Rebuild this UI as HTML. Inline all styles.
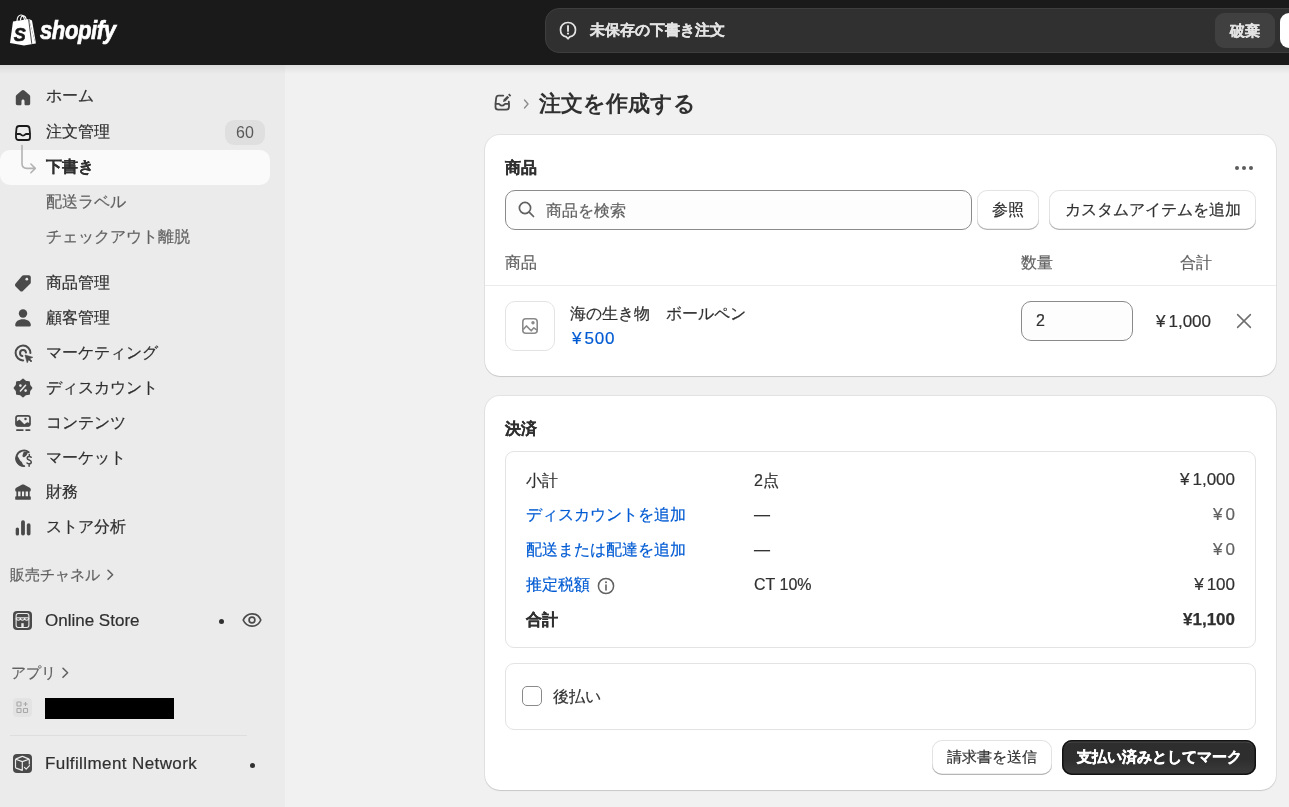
<!DOCTYPE html>
<html lang="ja"><head><meta charset="utf-8">
<style>
*{box-sizing:border-box;margin:0;padding:0}
html,body{width:1289px;height:807px;overflow:hidden}
body{position:relative;background:#f1f1f1;font-family:"Liberation Sans",sans-serif;color:#303030;font-size:16px}
#root{position:absolute;left:0;top:0;width:1289px;height:807px;will-change:transform}
.a{position:absolute;white-space:nowrap}
.t{position:absolute;white-space:nowrap;line-height:20px;font-size:16px;-webkit-text-stroke-width:0.2px}
#hdr{position:absolute;left:0;top:0;width:1289px;height:65px;background:#1a1a1a;z-index:5}
#hsh{position:absolute;left:0;top:65px;width:1289px;height:9px;background:linear-gradient(rgba(0,0,0,.07),rgba(0,0,0,0));z-index:4}
#side{position:absolute;left:0;top:65px;width:285px;height:742px;background:#ebebeb}
.ic{position:absolute;width:18px;height:18px}
.sub{color:#616161}
.card{position:absolute;left:485px;width:791px;background:#fff;border-radius:15px;box-shadow:0 0 0 1px rgba(0,0,0,.06),0 1px 1px rgba(0,0,0,.12)}
.btn{position:absolute;background:#fff;border-radius:10px;box-shadow:inset 0 -1.3px 0 #b5b5b5,inset 0 0 0 1px rgba(0,0,0,.11)}
.inp{position:absolute;background:#fdfdfd;border:1px solid #8a8a8a;border-radius:10px}
.box{position:absolute;border:1px solid #e3e3e3;border-radius:9px}
.blue{color:#005bd3}
.num{font-size:17px}
.yen{margin-right:3px}
</style></head><body><div id="root">

<div id="hdr">
  <!-- logo -->
  <svg class="a" style="left:9px;top:14px" width="29" height="32" viewBox="0 0 29 32">
    <path d="M4 7.5 L20 5 L26.5 29.5 L15 31.5 L1 29 Z" fill="#fff"/>
    <path d="M20 5 L23 6.5 L27 29.5 L26.5 29.5 Z" fill="#fff"/>
    <path d="M8 7 C8 3 10 1 12 1 C14 1 15 3 15.5 6" stroke="#fff" stroke-width="1.2" fill="none"/>
    <path d="M11.5 6.5 C11.5 3 13 1.6 14.6 1.8 C16.3 2 17 4 17.3 6" stroke="#fff" stroke-width="1.2" fill="none"/>
    <text x="4.8" y="26.5" font-family="Liberation Sans" font-weight="bold" font-style="italic" font-size="18" fill="#1a1a1a" stroke="#1a1a1a" stroke-width="0.6">S</text>
    <path d="M19.6 5.2 L22.8 29.8" stroke="#1a1a1a" stroke-width="0.8"/>
  </svg>
  <div class="a" style="left:40px;top:15px;font-size:26px;line-height:30px;font-weight:bold;font-style:italic;color:#fff;letter-spacing:-0.5px;transform:scaleX(0.85);transform-origin:0 0;-webkit-text-stroke:0.7px #fff">shopify</div>

  <!-- unsaved bar -->
  <div class="a" style="left:545px;top:8px;width:760px;height:45px;background:#303030;border:1px solid #3e3e3e;border-radius:14px"></div>
  <svg class="a" style="left:559px;top:21px" width="18" height="19" viewBox="0 0 18 19">
    <path d="M9 1.5 C4.6 1.5 1.5 4.6 1.5 8.8 C1.5 12.6 4 15.3 7.3 15.9 L9 17.8 L10.7 15.9 C14 15.3 16.5 12.6 16.5 8.8 C16.5 4.6 13.4 1.5 9 1.5 Z" fill="none" stroke="#e3e3e3" stroke-width="1.7" stroke-linejoin="round"/>
    <path d="M9 5 V10" stroke="#e3e3e3" stroke-width="1.9" stroke-linecap="round"/>
    <circle cx="9" cy="12.6" r="1.1" fill="#e3e3e3"/>
  </svg>
  <div class="t" style="left:590px;top:20px;font-size:15px;font-weight:bold;-webkit-text-stroke-width:0.25px;color:#e3e3e3">未保存の下書き注文</div>
  <div class="a" style="left:1215px;top:13px;width:60px;height:35px;background:#404040;border-radius:9px"></div>
  <div class="t" style="left:1230px;top:21px;font-size:15px;font-weight:bold;-webkit-text-stroke-width:0.25px;color:#e3e3e3">破棄</div>
  <div class="a" style="left:1280px;top:13px;width:60px;height:35px;background:#fff;border-radius:9px"></div>
</div>

<div id="side"></div><div id="hsh"></div>
<!-- highlight -->
<div class="a" style="left:0;top:150px;width:270px;height:35px;background:#fafafa;border-radius:10px"></div>

<!-- sidebar icons -->
<svg class="ic" style="left:15px;top:125px;width:16px;height:16px" viewBox="0 0 16 16"><path d="M4.2 1 H11.8 C13.3 1 14.3 2 14.5 3.4 L15 8.5 V12.4 C15 13.9 13.9 15 12.4 15 H3.6 C2.1 15 1 13.9 1 12.4 V8.5 L1.5 3.4 C1.7 2 2.7 1 4.2 1 Z" fill="none" stroke="#1a1a1a" stroke-width="1.8" stroke-linejoin="round"/><path d="M1.5 9 H5 C5.6 9 6 10.6 8 10.6 C10 10.6 10.4 9 11 9 H14.5" fill="none" stroke="#1a1a1a" stroke-width="1.8" stroke-linejoin="round"/></svg>
<svg class="a" style="left:18px;top:144px" width="22" height="32" viewBox="0 0 22 32"><path d="M4 1.5 V19.5 C4 22.6 5.6 24.4 8.8 24.4 H17 M12.9 20 L17.3 24.4 L12.9 28.8" fill="none" stroke="#b3b3b3" stroke-width="1.6" stroke-linecap="round" stroke-linejoin="round"/></svg>


<svg class="a" style="left:13px;top:87px" width="20" height="20" viewBox="0 0 20 20"><path d="M8.7 3.5 C9.5 2.8 10.5 2.8 11.3 3.5 L16.5 8 C17 8.4 17.2 9 17.2 9.6 V16.6 C17.2 17.5 16.5 18.2 15.6 18.2 H12.8 C12.1 18.2 11.5 17.6 11.5 16.9 V13.9 C11.5 13 10.8 12.4 10 12.4 C9.2 12.4 8.5 13 8.5 13.9 V16.9 C8.5 17.6 7.9 18.2 7.2 18.2 H4.4 C3.5 18.2 2.8 17.5 2.8 16.6 V9.6 C2.8 9 3 8.4 3.5 8 Z" fill="#4a4a4a"/></svg>
<svg class="a" style="left:13px;top:273px" width="20" height="20" viewBox="0 0 20 20"><path d="M10.6 2.2 H15.9 C16.9 2.2 17.8 3.1 17.8 4.1 V9.4 C17.8 9.9 17.6 10.4 17.2 10.8 L9.9 17.9 C9.1 18.7 7.9 18.7 7.1 17.9 L2.6 13.4 C1.8 12.6 1.8 11.4 2.6 10.6 L9.2 2.8 C9.6 2.4 10.1 2.2 10.6 2.2 Z" fill="#4a4a4a"/><circle cx="13.8" cy="6.2" r="1.35" fill="#ebebeb"/></svg>
<svg class="a" style="left:13px;top:308px" width="20" height="20" viewBox="0 0 20 20"><circle cx="10" cy="5.45" r="4.2" fill="#4a4a4a"/><path d="M2.2 16.9 C2.2 13.6 5.5 11.2 10 11.2 C14.5 11.2 17.8 13.6 17.8 16.9 C17.8 17.8 17.1 18.5 16.2 18.5 H3.8 C2.9 18.5 2.2 17.8 2.2 16.9 Z" fill="#4a4a4a"/></svg>
<svg class="a" style="left:13px;top:343px" width="20" height="20" viewBox="0 0 20 20"><path d="M17.4 10.1 A7.4 7.4 0 1 0 10.2 17.4" fill="none" stroke="#4a4a4a" stroke-width="2" stroke-linecap="round"/><path d="M13 9.6 A3 3 0 1 0 9.4 13" fill="none" stroke="#4a4a4a" stroke-width="2" stroke-linecap="round"/><path d="M12 12 L19.8 14.3 L16.7 15.7 L19 18 L18 19 L15.7 16.7 L14.2 19.8 Z" fill="#4a4a4a" stroke="#4a4a4a" stroke-width=".6" stroke-linejoin="round"/></svg>
<svg class="a" style="left:13px;top:378px" width="20" height="20" viewBox="0 0 20 20"><path d="M10.00 1.40 L12.68 3.53 L16.08 3.92 L16.47 7.32 L18.60 10.00 L16.47 12.68 L16.08 16.08 L12.68 16.47 L10.00 18.60 L7.32 16.47 L3.92 16.08 L3.53 12.68 L1.40 10.00 L3.53 7.32 L3.92 3.92 L7.32 3.53 Z" fill="#4a4a4a" stroke="#4a4a4a" stroke-width="1.6" stroke-linejoin="round"/><circle cx="7.4" cy="7.6" r="1.3" fill="#ebebeb"/><circle cx="12.6" cy="12.6" r="1.3" fill="#ebebeb"/><path d="M7.4 13 L12.6 7.2" stroke="#ebebeb" stroke-width="1.5" stroke-linecap="round"/></svg>
<svg class="a" style="left:13px;top:413px" width="20" height="20" viewBox="0 0 20 20"><rect x="3" y="2.9" width="14" height="10" rx="2.2" fill="none" stroke="#4a4a4a" stroke-width="1.7"/><path d="M2.8 9 L6.5 6.6 L11.3 11.2 L14.2 9.3 L17.2 10.2 V11.5 C17.2 12.7 16.4 13.6 15.2 13.6 H4.8 C3.6 13.6 2.8 12.7 2.8 11.5 Z" fill="#4a4a4a"/><circle cx="12.5" cy="6" r="1.25" fill="#4a4a4a"/><path d="M3.9 17.1 H9.8 M13.1 17.1 H16.6" stroke="#4a4a4a" stroke-width="1.8" stroke-linecap="round"/></svg>
<svg class="a" style="left:13px;top:448px" width="20" height="20" viewBox="0 0 20 20"><path d="M15.8 4.2 A7.8 7.8 0 1 0 11.3 18.1" fill="none" stroke="#4a4a4a" stroke-width="1.8" stroke-linecap="round"/><path d="M3 8 L4 7.5 C5.5 9 6 11 7.5 13 C8.6 13.8 9.5 14.5 9.6 16 L11.5 18 L8 18.2 C5 17 3 14 2.6 11 Z" fill="#4a4a4a"/><path d="M10.8 3.5 L15 4 C14.5 6 13.5 8 11 9.2 C9.5 9.2 9.2 8 9.6 7 Z" fill="#4a4a4a"/><path d="M18.2 9.2 C17.7 8.7 17 8.5 16.2 8.5 C15 8.5 14.2 9.2 14.2 10.2 C14.2 12.4 18.3 11.6 18.3 14 C18.3 15.1 17.4 15.8 16.2 15.8 C15.3 15.8 14.5 15.5 14 15 M16.3 6.6 V8.5 M16.1 15.8 V18.2" fill="none" stroke="#4a4a4a" stroke-width="1.5" stroke-linecap="round"/></svg>
<svg class="a" style="left:13px;top:482px" width="20" height="20" viewBox="0 0 20 20"><path d="M9.2 2.6 C9.7 2.3 10.3 2.3 10.8 2.6 L16.8 5.8 C17.4 6.1 17.8 6.7 17.8 7.4 V8 C17.8 8.9 17.1 9.6 16.2 9.6 H3.8 C2.9 9.6 2.2 8.9 2.2 8 V7.4 C2.2 6.7 2.6 6.1 3.2 5.8 Z" fill="#4a4a4a"/><rect x="3.4" y="9" width="1.7" height="6" fill="#4a4a4a"/><rect x="7.5" y="9" width="1.5" height="6" fill="#4a4a4a"/><rect x="11.1" y="9" width="1.5" height="6" fill="#4a4a4a"/><rect x="15" y="9" width="1.7" height="6" fill="#4a4a4a"/><rect x="2.2" y="14.2" width="15.6" height="3.6" rx=".9" fill="#4a4a4a"/></svg>
<svg class="a" style="left:13px;top:518px" width="20" height="20" viewBox="0 0 20 20"><rect x="2.7" y="9.4" width="3.3" height="8.2" rx="1.6" fill="#4a4a4a"/><rect x="8.1" y="2.2" width="3.8" height="15.4" rx="1.8" fill="#4a4a4a"/><rect x="13.8" y="5.2" width="3.7" height="12.4" rx="1.8" fill="#4a4a4a"/></svg>

<!-- sidebar text -->
<div class="t" style="left:46px;top:86px">ホーム</div>
<div class="t" style="left:46px;top:122px">注文管理</div>
<div class="a" style="left:225px;top:120px;width:40px;height:25px;border-radius:9px;background:#dfdfdf;font-size:16px;line-height:25px;text-align:center;color:#5a5a5a">60</div>
<div class="t" style="left:46px;top:157px;font-weight:bold;-webkit-text-stroke-width:0.05px">下書き</div>
<div class="t sub" style="left:46px;top:192px">配送ラベル</div>
<div class="t sub" style="left:46px;top:227px">チェックアウト離脱</div>
<div class="t" style="left:46px;top:273px">商品管理</div>
<div class="t" style="left:46px;top:308px">顧客管理</div>
<div class="t" style="left:46px;top:343px">マーケティング</div>
<div class="t" style="left:46px;top:378px">ディスカウント</div>
<div class="t" style="left:46px;top:413px">コンテンツ</div>
<div class="t" style="left:46px;top:448px">マーケット</div>
<div class="t" style="left:46px;top:482px">財務</div>
<div class="t" style="left:46px;top:517px">ストア分析</div>

<div class="t sub" style="left:10px;top:565px;font-size:15px">販売チャネル</div>
<svg class="a" style="left:106px;top:569px" width="9" height="12" viewBox="0 0 9 12"><path d="M2 1.3 L6.6 5.8 L2 10.3" fill="none" stroke="#616161" stroke-width="1.6" stroke-linecap="round" stroke-linejoin="round"/></svg>

<svg class="a" style="left:13px;top:611px" width="19" height="19" viewBox="0 0 19 19"><rect x="0" y="0" width="19" height="19" rx="4" fill="#4a4a4a"/><rect x="3.1" y="2.5" width="12.8" height="14" rx="2.2" fill="none" stroke="#ebebeb" stroke-width="1.1"/><path d="M3.2 6.8 H15.8" stroke="#ebebeb" stroke-width="1.1"/><path d="M3.2 7 C3.2 10 7.4 10 7.4 7 C7.4 10 11.6 10 11.6 7 C11.6 10 15.8 10 15.8 7" fill="none" stroke="#ebebeb" stroke-width="1.1"/><rect x="8.3" y="12.2" width="2.4" height="4.4" fill="#ebebeb"/></svg>
<div class="t" style="left:45px;top:611px;font-size:17px">Online Store</div>
<div class="a" style="left:219px;top:619px;width:5px;height:5px;border-radius:50%;background:#303030"></div>
<svg class="a" style="left:242px;top:612px" width="20" height="16" viewBox="0 0 20 16"><path d="M1.2 8 C3 4 6 1.8 10 1.8 C14 1.8 17 4 18.8 8 C17 12 14 14.2 10 14.2 C6 14.2 3 12 1.2 8 Z" fill="none" stroke="#4a4a4a" stroke-width="1.7"/><circle cx="10" cy="8" r="2.9" fill="none" stroke="#4a4a4a" stroke-width="1.7"/></svg>

<div class="t sub" style="left:11px;top:663px;font-size:15px">アプリ</div>
<svg class="a" style="left:61px;top:667px" width="9" height="12" viewBox="0 0 9 12"><path d="M2 1.3 L6.6 5.8 L2 10.3" fill="none" stroke="#616161" stroke-width="1.6" stroke-linecap="round" stroke-linejoin="round"/></svg>

<div class="a" style="left:13px;top:698px;width:19px;height:19px;border-radius:4px;background:#e3e3e3"></div>
<svg class="a" style="left:16px;top:701px" width="13" height="13" viewBox="0 0 13 13"><g fill="none" stroke="#a8a8a8" stroke-width="1.1"><rect x="1" y="1" width="4" height="4" rx=".6"/><rect x="1" y="7.5" width="4" height="4" rx=".6"/><rect x="7.5" y="7.5" width="4" height="4" rx=".6"/><path d="M9.5 1 V5 M7.5 3 H11.5"/></g></svg>
<div class="a" style="left:45px;top:698px;width:129px;height:21px;background:#000"></div>
<div class="a" style="left:10px;top:735px;width:237px;height:1px;background:#dedede"></div>

<svg class="a" style="left:13px;top:754px" width="19" height="19" viewBox="0 0 19 19"><rect x="0" y="0" width="19" height="19" rx="4" fill="#4a4a4a"/><path d="M16.3 10 V6 C16.3 5.5 16 5.1 15.6 4.9 L10.1 2.6 C9.6 2.4 9.1 2.4 8.6 2.6 L3.2 4.9 C2.8 5.1 2.5 5.5 2.5 6 V13 C2.5 13.5 2.8 13.9 3.2 14.1 L9.3 16.4 M2.7 5.3 L9.3 7.6 L16.1 5.3 M9.3 7.6 V16.3" fill="none" stroke="#ebebeb" stroke-width="1.2" stroke-linejoin="round" stroke-linecap="round"/><path d="M11.5 13.4 L13.2 15.1 L16.5 11.6" fill="none" stroke="#ebebeb" stroke-width="1.2" stroke-linecap="round" stroke-linejoin="round"/></svg>
<div class="t" style="left:45px;top:754px;font-size:17px;letter-spacing:0.4px">Fulfillment Network</div>
<div class="a" style="left:250px;top:763px;width:5px;height:5px;border-radius:50%;background:#303030"></div>

<!-- MAIN -->
<svg class="a" style="left:492px;top:91px" width="22" height="22" viewBox="0 0 22 22"><path d="M11.3 4.6 H6.6 C5.3 4.6 4.4 5.5 4.2 6.8 L3.5 12.8 V16 C3.5 17.6 4.6 18.7 6.2 18.7 H14.3 C15.9 18.7 17 17.6 17 16 V12.8 L16.8 10.6" fill="none" stroke="#4a4a4a" stroke-width="1.8" stroke-linecap="round"/><path d="M3.6 12.8 H6.9 C7.5 12.8 7.9 14.6 10 14.6 C12.1 14.6 12.5 12.8 13.1 12.8 H16.9" fill="none" stroke="#4a4a4a" stroke-width="1.8" stroke-linejoin="round"/><path d="M11 10.9 L11.6 8.4 L15.3 4.7 L17.2 6.6 L13.5 10.3 Z" fill="#4a4a4a"/><path d="M16.1 3.8 L17.3 2.6 L19.2 4.5 L18 5.7 Z" fill="#4a4a4a"/></svg>
<svg class="a" style="left:522px;top:98px" width="9" height="12" viewBox="0 0 9 12"><path d="M2.5 2 L6 6 L2.5 10" fill="none" stroke="#8a8a8a" stroke-width="1.3" stroke-linecap="round" stroke-linejoin="round"/></svg>
<div class="a" style="left:539px;top:89px;font-size:22px;line-height:30px;font-weight:bold">注文を作成する</div>

<div class="card" style="top:135px;height:241px"></div>
<div class="t" style="left:505px;top:158px;font-weight:bold;-webkit-text-stroke-width:0.25px">商品</div>
<div class="a" style="left:1235px;top:166px;width:4px;height:4px;border-radius:50%;background:#5c5c5c"></div>
<div class="a" style="left:1242px;top:166px;width:4px;height:4px;border-radius:50%;background:#5c5c5c"></div>
<div class="a" style="left:1249px;top:166px;width:4px;height:4px;border-radius:50%;background:#5c5c5c"></div>

<div class="inp" style="left:505px;top:190px;width:467px;height:40px"></div>
<svg class="a" style="left:518px;top:201px" width="17" height="17" viewBox="0 0 17 17"><circle cx="7" cy="7" r="5.6" fill="none" stroke="#616161" stroke-width="1.7"/><path d="M11.2 11.2 L15.5 15.5" stroke="#616161" stroke-width="1.7" stroke-linecap="round"/></svg>
<div class="t" style="left:546px;top:201px;color:#616161">商品を検索</div>
<div class="btn" style="left:977px;top:190px;width:62px;height:40px"></div>
<div class="t" style="left:992px;top:200px">参照</div>
<div class="btn" style="left:1049px;top:190px;width:207px;height:40px"></div>
<div class="t" style="left:1065px;top:200px">カスタムアイテムを追加</div>

<div class="t sub" style="left:505px;top:253px">商品</div>
<div class="t sub" style="left:1021px;top:253px">数量</div>
<div class="t sub" style="left:1180px;top:253px">合計</div>
<div class="a" style="left:485px;top:285px;width:791px;height:1px;background:#ebebeb"></div>

<div class="a" style="left:505px;top:301px;width:50px;height:50px;border:1px solid #e3e3e3;border-radius:10px"></div>
<svg class="a" style="left:521px;top:317px" width="18" height="18" viewBox="0 0 18 18"><rect x="1.8" y="1.8" width="14.4" height="14.4" rx="3" fill="none" stroke="#8a8a8a" stroke-width="1.6"/><path d="M2.2 12.6 L5.4 8.9 L10.2 13.8 L12.8 10.8 L16 13.2" fill="none" stroke="#8a8a8a" stroke-width="1.6" stroke-linejoin="round"/><circle cx="12" cy="5.8" r="1.7" fill="#8a8a8a"/></svg>
<div class="t" style="left:570px;top:304px">海の生き物　ボールペン</div>
<div class="t blue num" style="left:572px;top:329px"><span class="yen">¥</span><span style="letter-spacing:0.8px">500</span></div>
<div class="inp" style="left:1021px;top:301px;width:112px;height:40px"></div>
<div class="t" style="left:1036px;top:311px">2</div>
<div class="t num" style="left:1111px;top:312px;width:100px;text-align:right"><span class="yen">¥</span>1,000</div>
<svg class="a" style="left:1236px;top:313px" width="16" height="16" viewBox="0 0 16 16"><path d="M1.6 1.6 L14.4 14.4 M14.4 1.6 L1.6 14.4" stroke="#6e6e6e" stroke-width="1.5" stroke-linecap="round"/></svg>

<div class="card" style="top:396px;height:394px"></div>
<div class="t" style="left:505px;top:419px;font-weight:bold;-webkit-text-stroke-width:0.25px">決済</div>
<div class="box" style="left:505px;top:451px;width:751px;height:197px"></div>
<div class="t" style="left:526px;top:471px">小計</div>
<div class="t" style="left:754px;top:471px">2点</div>
<div class="t num" style="left:1135px;top:470px;width:100px;text-align:right"><span class="yen">¥</span>1,000</div>
<div class="t blue" style="left:526px;top:505px">ディスカウントを追加</div>
<div class="t" style="left:754px;top:505px">—</div>
<div class="t sub num" style="left:1135px;top:505px;width:100px;text-align:right"><span class="yen">¥</span>0</div>
<div class="t blue" style="left:526px;top:540px">配送または配達を追加</div>
<div class="t" style="left:754px;top:540px">—</div>
<div class="t sub num" style="left:1135px;top:540px;width:100px;text-align:right"><span class="yen">¥</span>0</div>
<div class="t blue" style="left:526px;top:575px">推定税額</div>
<svg class="a" style="left:597px;top:577px" width="18" height="18" viewBox="0 0 18 18"><circle cx="9" cy="9" r="7.6" fill="none" stroke="#616161" stroke-width="1.5"/><path d="M9 8 V13" stroke="#616161" stroke-width="1.6" stroke-linecap="round"/><circle cx="9" cy="5.3" r="1" fill="#616161"/></svg>
<div class="t" style="left:754px;top:575px">CT 10%</div>
<div class="t num" style="left:1135px;top:575px;width:100px;text-align:right"><span class="yen">¥</span>100</div>
<div class="t" style="left:526px;top:610px;font-weight:bold;-webkit-text-stroke-width:0.25px">合計</div>
<div class="t num" style="left:1135px;top:610px;width:100px;text-align:right;font-weight:bold;-webkit-text-stroke-width:0.25px"><span class="yen" style="margin-right:0">¥</span>1,100</div>

<div class="box" style="left:505px;top:663px;width:751px;height:67px"></div>
<div class="a" style="left:522px;top:686px;width:20px;height:20px;border:1px solid #8a8a8a;border-radius:5px"></div>
<div class="t" style="left:553px;top:687px">後払い</div>

<div class="btn" style="left:932px;top:740px;width:120px;height:35px"></div>
<div class="t" style="left:947px;top:747px;font-size:15px">請求書を送信</div>
<div class="a" style="left:1062px;top:740px;width:194px;height:35px;border-radius:10px;background:linear-gradient(#2e2e2e 0%,#2e2e2e 55%,#3c3c3c 100%);box-shadow:inset 0 0 0 1.5px #121212,inset 0 2.5px 0 rgba(255,255,255,.13)"></div>
<div class="t" style="left:1077px;top:747px;font-size:15px;font-weight:bold;-webkit-text-stroke-width:0.45px;color:#fff">支払い済みとしてマーク</div>

</div></body></html>
